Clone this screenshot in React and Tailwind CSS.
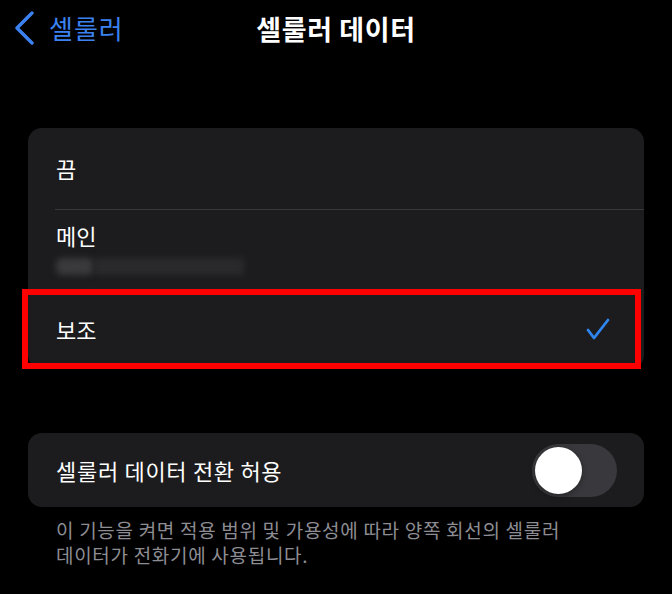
import React from "react";

const font = { fontFamily: '"Noto Sans CJK KR", "Noto Sans", sans-serif' };

export default function App() {
  return (
    <div
      className="w-[672px] h-[594px] bg-black text-white overflow-hidden"
      style={font}
    >
      {/* Header */}
      <div className="h-[56px] grid grid-cols-[1fr_auto_1fr] items-center">
        <div className="flex items-center pl-[14px] gap-[13px] text-[#3b82f0]">
          <svg width="22" height="34" viewBox="0 0 22 34" fill="none">
            <path
              d="M18 2 L3 17 L18 32"
              stroke="#3b82f0"
              strokeWidth="3.4"
              strokeLinecap="round"
              strokeLinejoin="round"
            />
          </svg>
          <span className="text-[26px] leading-none tracking-[1px]">셀룰러</span>
        </div>
        <div className="text-[27px] font-semibold leading-none tracking-[0.6px]">
          셀룰러 데이터
        </div>
        <div />
      </div>

      {/* Card 1 */}
      <div className="mt-[72px] mx-[28px] bg-[#1c1c1e] rounded-[14px] relative">
        <div className="h-[81px] flex items-center pl-[28px] text-[22px]">
          끔
        </div>
        <div className="ml-[27px] h-px bg-[#38383a]" />
        <div className="h-[79px] flex flex-col pl-[28px] pt-[10px]">
          <span className="text-[22px] leading-[30px]">메인</span>
          <div className="mt-[8px] flex items-center">
            <div className="w-[38px] h-[17px] rounded-[6px] bg-[#3a3a3c] blur-[3px]" />
            <div className="w-[150px] h-[17px] bg-[#2a2a2c] blur-[3px]" />
          </div>
        </div>
        <div className="h-[80px] flex items-center justify-between pl-[28px] pr-[34px] relative">
          <span className="text-[22px]">보조</span>
          <svg width="24" height="22" viewBox="0 0 24 22" fill="none">
            <path
              d="M2 12 L8 20 L22 2"
              stroke="#2f86f0"
              strokeWidth="2.8"
              strokeLinecap="round"
              strokeLinejoin="round"
            />
          </svg>
          <div className="absolute -left-[6px] right-[3px] top-0 bottom-0 border-[6px] border-[#ff0000]" />
        </div>
      </div>

      {/* Card 2 */}
      <div className="mt-[64px] mx-[28px] bg-[#1c1c1e] rounded-[14px] h-[74px] flex items-center justify-between pl-[28px] pr-[27px]">
        <span className="text-[22px] tracking-[0.7px]">셀룰러 데이터 전환 허용</span>
        <div className="w-[85px] h-[53px] rounded-full bg-[#39393d] p-[3px] flex items-center">
          <div className="w-[47px] h-[47px] rounded-full bg-white shadow-[0_2px_6px_rgba(0,0,0,0.35)]" />
        </div>
      </div>

      {/* Footer */}
      <p className="mt-[10px] pl-[56px] pr-[20px] text-[19px] leading-[25px] tracking-[0.7px] text-[#8d8d93] whitespace-nowrap">
        이 기능을 켜면 적용 범위 및 가용성에 따라 양쪽 회선의 셀룰러
        <br />
        데이터가 전화기에 사용됩니다.
      </p>
    </div>
  );
}
